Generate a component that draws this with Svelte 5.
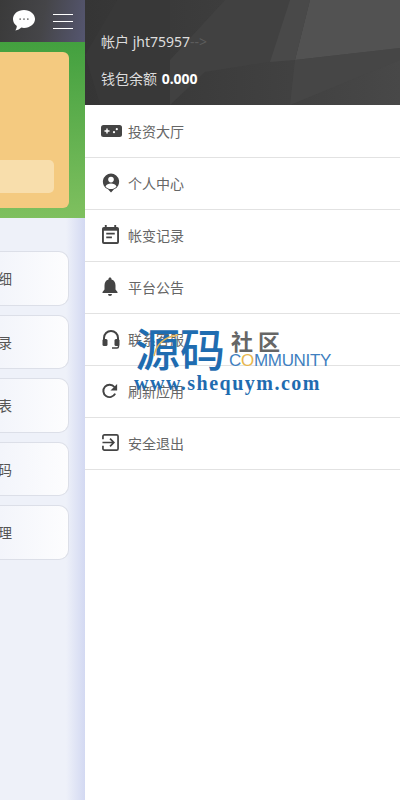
<script>
  const cards = ['细', '录', '表', '码', '理'];
  const menu = [
    { label: '投资大厅', icon: 'game' },
    { label: '个人中心', icon: 'user' },
    { label: '帐变记录', icon: 'cal' },
    { label: '平台公告', icon: 'bell' },
    { label: '联系客服', icon: 'head' },
    { label: '刷新应用', icon: 'refresh' },
    { label: '安全退出', icon: 'exit' }
  ];
</script>

<div class="page">
  <aside class="behind">
    <div class="topbar">
      <svg class="chat" viewBox="0 0 24 24" width="24" height="23">
        <path fill="#fff" d="M12 1C5.600 1 .5 5 .5 10.500c0 3 1.500 5.500 4 7.200 0 1.800-.8 3.400-1.500 4.800 2.400-.3 4.600-1.600 6.200-3.100.9.200 1.800.3 2.800.3 6.400 0 11.500-4 11.500-9.200S18.400 1 12 1z" />
        <circle cx="8" cy="10.500" r="0.900" fill="#666" />
        <circle cx="12" cy="10.500" r="0.900" fill="#666" />
        <circle cx="16" cy="10.500" r="0.900" fill="#666" />
      </svg>
      <div class="burger"><i></i><i></i><i></i></div>
    </div>
    <div class="hero">
      <div class="orange"><div class="pale"></div></div>
    </div>
    <div class="cards">
      {#each cards as c}
        <div class="card"><span>{c}</span></div>
      {/each}
    </div>
  </aside>

  <main class="drawer">
    <header class="head">
      <svg class="facets" viewBox="0 0 315 105" preserveAspectRatio="none">
        <defs>
          <linearGradient id="base" x1="0" x2="1" y1="0" y2="0">
            <stop offset="0" stop-color="#353535" />
            <stop offset="0.6" stop-color="#404040" />
            <stop offset="1" stop-color="#484848" />
          </linearGradient>
        </defs>
        <rect width="315" height="105" fill="url(#base)" />
        <polygon points="0,55 32,0 85,0 85,105 15,105" fill="#383838" />
        <polygon points="85,105 85,60 140,0 205,0 210,58 120,72" fill="#414141" />
        <polygon points="225,0 315,0 315,48 210,60" fill="#525252" />
        <polygon points="205,0 225,0 210,60 185,62" fill="#494949" />
        <polygon points="210,60 315,48 315,60 205,105" fill="#464646" />
      </svg>
      <div class="line acct">帐户 jht75957<span class="chev">--&gt;</span></div>
      <div class="line bal">钱包余额 <b>0.000</b></div>
    </header>
    <nav>
      {#each menu as m}
        <div class="row">
          <span class="ico">
            {#if m.icon === 'game'}
              <svg viewBox="0 0 21 12" width="21" height="12">
                <rect width="21" height="12" rx="2.500" fill="#444" />
                <path d="M3.500 6h5M6 3.500v5" stroke="#fff" stroke-width="1.400" />
                <circle cx="15.800" cy="4.200" r="1.100" fill="#fff" />
                <circle cx="13" cy="7.200" r="1.100" fill="#fff" />
              </svg>
            {:else if m.icon === 'user'}
              <svg class="nudge" viewBox="0 0 18 20" width="18" height="20">
                <path fill="#444" d="M9 .5a8.200 8.200 0 0 0-3 15.800L9 19.500l3-3.200A8.200 8.200 0 0 0 9 .5z" />
                <circle cx="9" cy="6.600" r="2.800" fill="#fff" />
                <path fill="#fff" d="M3.500 13.500c1-2.300 3-3 5.500-3s4.500.7 5.500 3C13 15.400 11 16 9 16s-4-.6-5.500-2.500z" />
              </svg>
            {:else if m.icon === 'cal'}
              <svg class="nudge" viewBox="0 0 18 20" width="17" height="19">
                <path fill="#444" d="M3 0h2v2h8V0h2v2h1a2 2 0 0 1 2 2v14a2 2 0 0 1-2 2H2a2 2 0 0 1-2-2V4a2 2 0 0 1 2-2h1z" />
                <rect x="2" y="6" width="14" height="12" fill="#fff" />
                <path d="M4.500 9h9M4.500 13h6" stroke="#444" stroke-width="1.800" />
              </svg>
            {:else if m.icon === 'bell'}
              <svg class="nudge" viewBox="0 0 16 20" width="16" height="20">
                <path fill="#444" d="M8 0.500c-.9 0-1.500.6-1.500 1.500v.6C3.700 3.300 2.500 5.700 2.500 8.500v4L.5 15v1h15v-1l-2-2.500v-4c0-2.800-1.200-5.200-4-5.900V2c0-.9-.6-1.500-1.500-1.500zM6 17a2 2 0 0 0 4 0z" />
              </svg>
            {:else if m.icon === 'head'}
              <svg class="nudge" viewBox="0 0 18 20" width="18" height="20">
                <path fill="none" stroke="#444" stroke-width="2" d="M2 12V9a7 7 0 0 1 14 0v3" />
                <rect x="0.500" y="10" width="5" height="7" rx="1.500" fill="#444" />
                <rect x="12.500" y="10" width="5" height="7" rx="1.500" fill="#444" />
                <path fill="none" stroke="#444" stroke-width="1.400" d="M16.500 16v1.500a1.500 1.500 0 0 1-1.500 1.500h-5" />
              </svg>
            {:else if m.icon === 'refresh'}
              <svg class="nudge" viewBox="0 0 18 18" width="16" height="16">
                <path fill="none" stroke="#444" stroke-width="2.200" d="M14.800 12A7 7 0 1 1 14 4.500" />
                <path fill="#444" d="M17 1v7.500H9.500z" />
              </svg>
            {:else}
              <svg class="nudge" viewBox="0 0 18 18" width="17" height="17">
                <path fill="none" stroke="#444" stroke-width="1.800" d="M1 5.500V2.500A1.500 1.500 0 0 1 2.500 1h13A1.500 1.500 0 0 1 17 2.500v13a1.500 1.500 0 0 1-1.500 1.500h-13A1.500 1.500 0 0 1 1 15.500v-3" />
                <path fill="none" stroke="#444" stroke-width="1.800" d="M0.500 9H12M8.500 5l4 4-4 4" />
              </svg>
            {/if}
          </span>
          <span class="label">{m.label}</span>
        </div>
      {/each}
    </nav>
  </main>

  <div class="mark">
    <svg class="swoosh" viewBox="0 0 60 40" width="60" height="40">
      <path d="M19 32C21 21 29 13 43 11" fill="none" stroke="#e3b75c" stroke-width="1.500" />
    </svg>
    <div class="mark-top">
      <span class="yuan">源码</span>
      <div class="mark-side">
        <span class="she">社区</span>
        <span class="comm">C<em>O</em>MMUNITY</span>
      </div>
    </div>
    <div class="url">www.shequym.com</div>
  </div>
</div>

<style>
  :global(body) {
    margin: 0;
  }
  .page {
    position: relative;
    display: flex;
    width: 400px;
    height: 800px;
    overflow: hidden;
    font-family: "Noto Sans", "Noto Sans CJK SC", sans-serif;
  }
  .behind {
    flex: 0 0 85px;
    display: flex;
    flex-direction: column;
    overflow: hidden;
    background: linear-gradient(90deg, #eef1f9 0, #eef1f9 66px, #d3d9f2 85px);
  }
  .topbar {
    flex: 0 0 42px;
    display: flex;
    align-items: center;
    justify-content: flex-end;
    gap: 17px;
    padding-right: 12px;
    box-sizing: border-box;
    background: linear-gradient(100deg, #3a3a3a 0, #454548 50%, #555670 100%);
  }
  .chat {
    margin-bottom: 1px;
  }
  .burger {
    display: flex;
    flex-direction: column;
    gap: 6px;
    width: 20px;
  }
  .burger i {
    display: block;
    height: 1px;
    background: #fff;
  }
  .hero {
    flex: 0 0 176px;
    box-sizing: border-box;
    padding: 10px 16px 10px 0;
    background: linear-gradient(180deg, #43a03f 0, #7fc05f 100%);
    display: flex;
  }
  .orange {
    flex: 1;
    position: relative;
    background: #f4ca80;
    border-radius: 0 6px 6px 0;
  }
  .pale {
    position: absolute;
    left: 0;
    right: 15px;
    top: 108px;
    height: 33px;
    background: #f8deac;
    border-radius: 0 5px 5px 0;
  }
  .cards {
    display: flex;
    flex-direction: column;
    gap: 9px;
    padding: 33px 16px 0 0;
  }
  .card {
    height: 54.500px;
    box-sizing: border-box;
    border: 1px solid #dcdfe8;
    border-left: 0;
    border-radius: 0 10px 10px 0;
    background: linear-gradient(90deg, #f3f5fb, #fdfdfe);
    display: flex;
    align-items: center;
    font-size: 14px;
    color: #555;
  }
  .card span {
    margin-left: -2px;
  }
  .drawer {
    flex: 1;
    background: #fff;
    min-width: 0;
  }
  .head {
    position: relative;
    height: 105px;
    box-sizing: border-box;
    padding: 32px 0 0 16px;
    background: #424242;
    color: #ddd;
    font-size: 14px;
  }
  .facets {
    position: absolute;
    inset: 0;
    width: 100%;
    height: 100%;
  }
  .line {
    position: relative;
    height: 20px;
    line-height: 20px;
    white-space: nowrap;
  }
  .bal {
    margin-top: 17px;
  }
  .bal b {
    color: #fff;
    margin-left: 1px;
    font-size: 14px;
  }
  .chev {
    color: #5c5c5c;
  }
  nav {
    padding-top: 1px;
  }
  .row {
    height: 52px;
    box-sizing: border-box;
    border-bottom: 1px solid #e2e2e2;
    display: flex;
    align-items: center;
    padding: 0 0 2px 16px;
  }
  .ico {
    flex: 0 0 27px;
    display: flex;
  }
  .ico svg {
    display: block;
  }
  .ico .nudge {
    margin-left: 1px;
  }
  .label {
    font-size: 14px;
    color: #666;
  }
  .mark {
    position: absolute;
    left: 135px;
    top: 324px;
    width: 200px;
  }
  .swoosh {
    position: absolute;
    left: 0;
    top: 0;
  }
  .mark-top {
    display: flex;
    align-items: flex-start;
    height: 47px;
  }
  .yuan {
    font-size: 45px;
    line-height: 47px;
    font-weight: 500;
    color: #1f6cb0;
    width: 96px;
    white-space: nowrap;
    font-family: "Noto Sans CJK SC", sans-serif;
  }
  .mark-side {
    display: flex;
    flex-direction: column;
    padding-top: 4px;
  }
  .she {
    font-size: 22px;
    line-height: 24px;
    font-weight: 700;
    color: #666;
    letter-spacing: 5px;
    font-family: "Noto Sans CJK SC", sans-serif;
  }
  .comm {
    margin-left: -2px;
    font-size: 17px;
    line-height: 17px;
    color: #3f7fc0;
    letter-spacing: -0.300px;
    font-family: "Liberation Sans", sans-serif;
  }
  .comm em {
    font-style: normal;
    color: #e8b64c;
  }
  .url {
    margin-left: -1px;
    font-family: "Liberation Serif", serif;
    font-weight: 700;
    font-size: 20px;
    line-height: 24px;
    color: #1f6cb0;
    white-space: nowrap;
    letter-spacing: 1.500px;
  }
</style>
